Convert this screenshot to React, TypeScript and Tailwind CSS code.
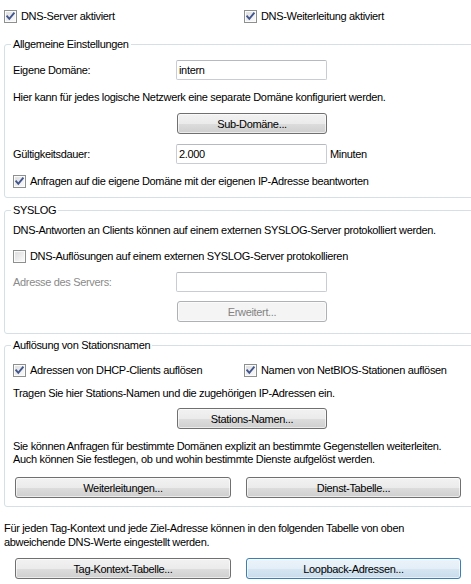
import React from 'react';

const font = "font-['Liberation_Sans',Arial,sans-serif] text-[11px] tracking-[-0.33px] leading-[14px] text-black";

function CheckBox({ checked, label }: { checked: boolean; label: string }) {
  return (
    <div className="flex items-center h-[14px] whitespace-nowrap">
      <svg width="13" height="13" viewBox="0 0 13 13" className="shrink-0">
        <defs>
          <linearGradient id="cbg" x1="0" y1="0" x2="1" y2="1">
            <stop offset="0" stopColor="#dcdcdc" />
            <stop offset="1" stopColor="#fbfbfb" />
          </linearGradient>
        </defs>
        <rect x="0.5" y="0.5" width="12" height="12" fill="#fff" stroke="#8e8f8f" />
        <rect x="2" y="2" width="9" height="9" fill="url(#cbg)" stroke="#f0f0f0" strokeWidth="0.5" />
        {checked && (
          <path d="M3.2 6.4 L5.3 8.8 L9.8 3.4" fill="none" stroke="#41568f" strokeWidth="1.9" strokeLinecap="square" />
        )}
      </svg>
      <span className="ml-[4px]">{label}</span>
    </div>
  );
}

function Button({
  label,
  width,
  disabled,
  focused,
}: {
  label: string;
  width: string;
  disabled?: boolean;
  focused?: boolean;
}) {
  let cls =
    'border-[#707070] bg-[linear-gradient(#f2f2f2_0%,#ebebeb_50%,#dddddd_51%,#cfcfcf_100%)] text-black';
  if (disabled) cls = 'border-[#adb2b5] bg-[#f4f4f4] text-[#838383]';
  if (focused)
    cls =
      'border-[#3c7fb1] bg-[linear-gradient(#edf4fa_0%,#e3eef7_50%,#d6e6f2_51%,#c8dcec_100%)] text-black';
  return (
    <div
      className={`${width} h-[21px] shrink-0 rounded-[3px] border flex items-center justify-center shadow-[inset_0_0_0_1px_rgba(255,255,255,0.6)] ${cls}`}
    >
      {label}
    </div>
  );
}

function TextInput({ value }: { value?: string }) {
  return (
    <div className="w-[151px] h-[20px] rounded-[2px] border border-[#c9cdd3] border-t-[#b5b9c0] bg-white flex items-center pl-[2px]">
      {value}
    </div>
  );
}

function Group({ title, className, children }: { title: string; className: string; children: React.ReactNode }) {
  return (
    <fieldset className={`w-[490px] rounded-[3px] border border-[#d5dfe5] pl-[8px] ${className}`}>
      <legend className="ml-[-2px] px-[2px] leading-[14px]">{title}</legend>
      {children}
    </fieldset>
  );
}

export default function App() {
  return (
    <div className={`w-[471px] h-[584px] overflow-hidden bg-white ${font}`}>
      <div className="pl-[4px] pt-[9px]">
        {/* Top toggles */}
        <div className="flex h-[14px]">
          <div className="w-[240px]">
            <CheckBox checked label="DNS-Server aktiviert" />
          </div>
          <CheckBox checked label="DNS-Weiterleitung aktiviert" />
        </div>

        {/* Allgemeine Einstellungen */}
        <Group title="Allgemeine Einstellungen" className="mt-[14px] pb-[9px]">
          <div className="mt-[9px] flex items-center">
            <span className="w-[163px]">Eigene Domäne:</span>
            <TextInput value="intern" />
          </div>
          <p className="mt-[10px]">Hier kann für jedes logische Netzwerk eine separate Domäne konfiguriert werden.</p>
          <div className="mt-[9px] pl-[164px]">
            <Button label="Sub-Domäne..." width="w-[150px]" />
          </div>
          <div className="mt-[10px] flex items-center">
            <span className="w-[163px]">Gültigkeitsdauer:</span>
            <TextInput value="2.000" />
            <span className="ml-[3px]">Minuten</span>
          </div>
          <div className="mt-[10px]">
            <CheckBox checked label="Anfragen auf die eigene Domäne mit der eigenen IP-Adresse beantworten" />
          </div>
        </Group>

        {/* SYSLOG */}
        <Group title="SYSLOG" className="mt-[5px] pb-[11px]">
          <p className="mt-[6px]">DNS-Antworten an Clients können auf einem externen SYSLOG-Server protokolliert werden.</p>
          <div className="mt-[12px]">
            <CheckBox checked={false} label="DNS-Auflösungen auf einem externen SYSLOG-Server protokollieren" />
          </div>
          <div className="mt-[9px] flex items-center">
            <span className="w-[163px] text-[#8a8a8a]">Adresse des Servers:</span>
            <TextInput />
          </div>
          <div className="mt-[9px] pl-[164px]">
            <Button label="Erweitert..." width="w-[150px]" disabled />
          </div>
        </Group>

        {/* Auflösung von Stationsnamen */}
        <Group title="Auflösung von Stationsnamen" className="mt-[4px] pb-[8px]">
          <div className="mt-[11px] flex">
            <div className="w-[231px]">
              <CheckBox checked label="Adressen von DHCP-Clients auflösen" />
            </div>
            <CheckBox checked label="Namen von NetBIOS-Stationen auflösen" />
          </div>
          <p className="mt-[9px]">Tragen Sie hier Stations-Namen und die zugehörigen IP-Adressen ein.</p>
          <div className="mt-[8px] pl-[164px]">
            <Button label="Stations-Namen..." width="w-[150px]" />
          </div>
          <p className="mt-[11px] leading-[13px]">
            Sie können Anfragen für bestimmte Domänen explizit an bestimmte Gegenstellen weiterleiten.
            <br />
            Auch können Sie festlegen, ob und wohin bestimmte Dienste aufgelöst werden.
          </p>
          <div className="mt-[11px] flex pl-[2px] gap-[15px]">
            <Button label="Weiterleitungen..." width="w-[216px]" />
            <Button label="Dienst-Tabelle..." width="w-[215px]" />
          </div>
        </Group>

        {/* Tag-Kontext */}
        <p className="mt-[14px]">
          Für jeden Tag-Kontext und jede Ziel-Adresse können in den folgenden Tabelle von oben
          <br />
          abweichende DNS-Werte eingestellt werden.
        </p>
        <div className="mt-[9px] flex pl-[11px] gap-[15px]">
          <Button label="Tag-Kontext-Tabelle..." width="w-[216px]" />
          <Button label="Loopback-Adressen..." width="w-[215px]" focused />
        </div>
      </div>
    </div>
  );
}
